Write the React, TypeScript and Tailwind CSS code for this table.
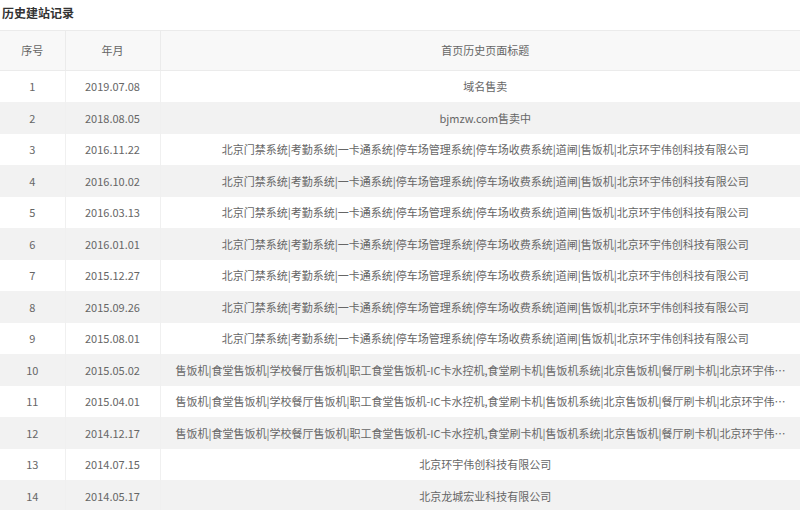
const door = '北京门禁系统|考勤系统|一卡通系统|停车场管理系统|停车场收费系统|道闸|售饭机|北京环宇伟创科技有限公司';
const canteen = '售饭机|食堂售饭机|学校餐厅售饭机|职工食堂售饭机-IC卡水控机,食堂刷卡机|售饭机系统|北京售饭机|餐厅刷卡机|北京环宇伟创科技有限公司';

const records = [
  { no: 1, date: '2019.07.08', title: '域名售卖' },
  { no: 2, date: '2018.08.05', title: 'bjmzw.com售卖中' },
  { no: 3, date: '2016.11.22', title: door },
  { no: 4, date: '2016.10.02', title: door },
  { no: 5, date: '2016.03.13', title: door },
  { no: 6, date: '2016.01.01', title: door },
  { no: 7, date: '2015.12.27', title: door },
  { no: 8, date: '2015.09.26', title: door },
  { no: 9, date: '2015.08.01', title: door },
  { no: 10, date: '2015.05.02', title: canteen },
  { no: 11, date: '2015.04.01', title: canteen },
  { no: 12, date: '2014.12.17', title: canteen },
  { no: 13, date: '2014.07.15', title: '北京环宇伟创科技有限公司' },
  { no: 14, date: '2014.05.17', title: '北京龙城宏业科技有限公司' },
];

export default function App() {
  return (
    <div
      className="h-[510px] w-[800px] overflow-hidden bg-white text-[#666]"
      style={{ fontFamily: '"Noto Sans CJK SC", "Noto Sans", sans-serif' }}
    >
      <h3 className="h-[30px] pl-[2px] pt-[4px] text-[12px] font-bold leading-[18px] text-[#333]">
        历史建站记录
      </h3>
      <table className="w-[810px] table-fixed border-collapse text-[11px]">
        <colgroup>
          <col className="w-[65px]" />
          <col className="w-[95px]" />
          <col />
        </colgroup>
        <thead>
          <tr className="h-[40px] border-y border-[#ebebeb] bg-[#f8f8f8]">
            <th className="border-r border-[#ebebeb] font-normal">序号</th>
            <th className="border-r border-[#ebebeb] font-normal">年月</th>
            <th className="font-normal">首页历史页面标题</th>
          </tr>
        </thead>
        <tbody>
          {records.map((r) => (
            <tr key={r.no} className={r.no % 2 === 0 ? 'h-[31.5px] bg-[#f2f2f2]' : 'h-[31.5px] bg-white'}>
              <td className="border-r border-[#f0f0f0] text-center">{r.no}</td>
              <td className="border-r border-[#f0f0f0] text-center">{r.date}</td>
              <td className="overflow-hidden text-ellipsis whitespace-nowrap px-[15px] text-center">{r.title}</td>
            </tr>
          ))}
        </tbody>
      </table>
    </div>
  );
}
